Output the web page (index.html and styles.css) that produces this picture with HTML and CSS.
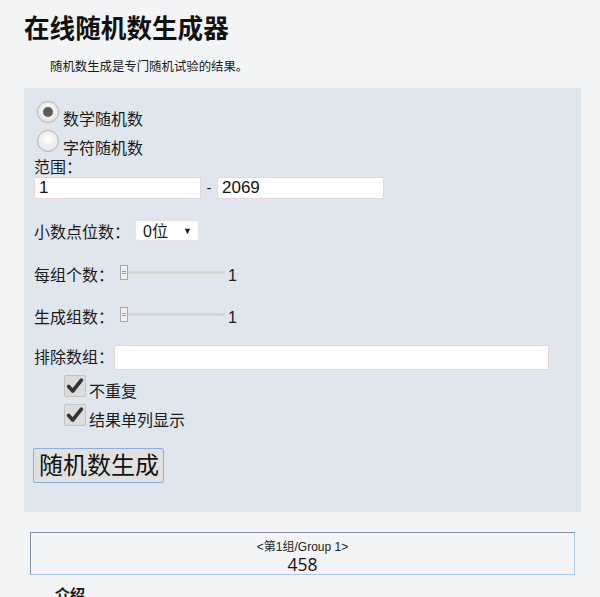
FILE: index.html
```html
<!DOCTYPE html>
<html lang="zh-CN">
<head>
<meta charset="utf-8">
<title>在线随机数生成器</title>
<link rel="stylesheet" href="styles.css">
</head>
<body>
<div class="page">
  <h1 class="title">在线随机数生成器</h1>
  <p class="subtitle">随机数生成是专门随机试验的结果。</p>

  <div class="panel">
    <div class="radio-row">
      <span class="radio checked"></span><span class="lbl">数学随机数</span>
    </div>
    <div class="radio-row second">
      <span class="radio"></span><span class="lbl">字符随机数</span>
    </div>
    <div class="text-row">范围：</div>
    <div class="range-row">
      <span class="field range-field">1</span>
      <span class="dash">-</span>
      <span class="field range-field">2069</span>
    </div>

    <div class="select-row">
      <span class="lbl">小数点位数：</span>
      <span class="select"><span>0位</span><span class="arrow">▼</span></span>
    </div>

    <div class="slider-row">
      <span class="lbl">每组个数：</span>
      <span class="slider"><span class="track"></span><span class="thumb"></span></span>
      <span class="val">1</span>
    </div>
    <div class="slider-row">
      <span class="lbl">生成组数：</span>
      <span class="slider"><span class="track"></span><span class="thumb"></span></span>
      <span class="val">1</span>
    </div>

    <div class="exclude-row">
      <span class="lbl">排除数组：</span>
      <span class="field exclude-field"></span>
    </div>

    <div class="check-row">
      <span class="check"><svg viewBox="0 0 22 22" width="22" height="22"><path d="M4 11.5 L8.5 16.5 L18 4.5" fill="none" stroke="#333" stroke-width="4" stroke-linecap="round" stroke-linejoin="round"/></svg></span><span class="lbl">不重复</span>
    </div>
    <div class="check-row second">
      <span class="check"><svg viewBox="0 0 22 22" width="22" height="22"><path d="M4 11.5 L8.5 16.5 L18 4.5" fill="none" stroke="#333" stroke-width="4" stroke-linecap="round" stroke-linejoin="round"/></svg></span><span class="lbl">结果单列显示</span>
    </div>

    <div class="btn-row">
      <span class="btn">随机数生成</span>
    </div>
  </div>

  <div class="result">
    <div class="group">&lt;第1组/Group 1&gt;</div>
    <div class="num">458</div>
  </div>

  <h3 class="intro">介绍</h3>
</div>
</body>
</html>
```

FILE: styles.css
```css
html, body {
  margin: 0;
  padding: 0;
  background: #f3f4f6;
  color: #1a1a1a;
  font-family: "Liberation Sans", "Noto Sans CJK SC", sans-serif;
  overflow: hidden;
}

.page {
  padding: 0 19px 0 24px;
}

.title {
  margin: 14px 0 0;
  font-size: 25.6px;
  line-height: 30px;
  font-weight: bold;
  color: #111;
}

.subtitle {
  margin: 15px 0 0;
  padding-left: 26px;
  font-size: 12.4px;
  line-height: 16px;
  color: #1a1a1a;
}

.panel {
  margin-top: 13px;
  width: 537px;
  background: #e0e6ee;
  padding: 11px 10px 29px 10px;
}

.lbl {
  font-size: 16px;
  line-height: 18px;
  white-space: nowrap;
}

.radio-row {
  display: flex;
  align-items: flex-end;
  height: 28px;
}
.radio-row.second {
  height: 29px;
}
.radio-row .lbl {
  margin-bottom: -2px;
}

.radio {
  width: 20px;
  height: 20px;
  margin: 0 4px 4px 3px;
  border: 1px solid #b4b4b4;
  border-radius: 50%;
  background: radial-gradient(circle at 50% 40%, #fdfdfd 0%, #ececec 60%, #d6d6d6 100%);
  position: relative;
  flex: none;
}
.radio.checked::after {
  content: "";
  position: absolute;
  left: 5px;
  top: 5px;
  width: 10px;
  height: 10px;
  border-radius: 50%;
  background: #5c5c5c;
}

.text-row {
  font-size: 16px;
  line-height: 20px;
  padding-top: 2px;
  height: 18px;
}

.field {
  display: block;
  background: #fff;
  border: 1px solid #ead5dc;
  border-radius: 2px;
  box-sizing: border-box;
  font-family: "Liberation Sans", sans-serif;
  font-size: 17px;
  line-height: 20px;
  padding-left: 4px;
  color: #111;
}

.range-row {
  display: flex;
  align-items: center;
  margin-top: 1px;
  height: 22px;
}
.range-field {
  width: 167px;
  height: 22px;
}
.dash {
  width: 16px;
  text-align: center;
  font-size: 15px;
  line-height: 20px;
}

.select-row {
  display: flex;
  align-items: center;
  margin-top: 21px;
  height: 21px;
}
.select-row .lbl {
  padding-top: 4px;
}
.select {
  display: flex;
  align-items: center;
  justify-content: space-between;
  margin-left: 5px;
  width: 64px;
  height: 21px;
  box-sizing: border-box;
  background: #fff;
  border: 1px solid #ecdde2;
  border-radius: 2px;
  padding: 1px 6px 0 7px;
  font-size: 16px;
  line-height: 19px;
}
.arrow {
  font-size: 9px;
  line-height: 10px;
}

.slider-row {
  display: flex;
  align-items: center;
  margin-top: 24px;
  height: 20px;
}
.slider-row + .slider-row {
  margin-top: 22px;
}
.slider-row .lbl,
.slider-row .val {
  padding-top: 2px;
}
.slider {
  position: relative;
  width: 105px;
  height: 20px;
  margin-left: 6px;
  flex: none;
}
.track {
  position: absolute;
  left: 0;
  right: 0;
  top: 6px;
  height: 3px;
  background: #d6d6d6;
  border-radius: 2px;
}
.thumb {
  position: absolute;
  left: 0;
  top: 0;
  width: 8px;
  height: 15px;
  box-sizing: border-box;
  background: #f0f0f0 linear-gradient(#999, #999) center 5px / 4px 1px no-repeat;
  border: 1px solid #a8a8a8;
}
.thumb::after {
  content: "";
  position: absolute;
  left: 1px;
  top: 7px;
  width: 4px;
  height: 1px;
  background: #999;
}
.val {
  margin-left: 3px;
  font-size: 16px;
  line-height: 18px;
}

.exclude-row {
  display: flex;
  align-items: center;
  margin-top: 18px;
  height: 25px;
}
.exclude-field {
  width: 435px;
  height: 25px;
}

.check-row {
  display: flex;
  align-items: flex-end;
  margin-top: 4px;
  height: 25px;
  padding-left: 30px;
}
.check-row.second {
  margin-top: 0;
  height: 29px;
}
.check-row .lbl {
  margin-bottom: -2px;
}
.check {
  width: 22px;
  height: 22px;
  box-sizing: border-box;
  margin: 0 3px 2px 0;
  background: #dcdcdc;
  border: 1px solid #c4c4c4;
  border-radius: 2px;
  display: flex;
  align-items: center;
  justify-content: center;
  flex: none;
}
.check svg {
  display: block;
}

.btn-row {
  margin-top: 20px;
  display: flex;
}
.btn {
  display: block;
  margin-left: -1px;
  height: 35px;
  box-sizing: border-box;
  padding: 0 4px 0 5px;
  background: #e1e1e1;
  border: 1px solid #8aaee6;
  border-radius: 2px;
  font-size: 24px;
  line-height: 33px;
  color: #111;
}

.result {
  margin: 20px 0 0 6px;
  width: 545px;
  height: 43px;
  box-sizing: border-box;
  border: 1px solid #a9c8ea;
  border-top-color: #8293a8;
  border-left-color: #8293a8;
  text-align: center;
  padding-top: 7px;
}
.group {
  font-size: 12px;
  line-height: 14px;
  color: #222;
}
.num {
  font-family: "Open Sans", "Liberation Sans", sans-serif;
  font-size: 17.5px;
  line-height: 20px;
  color: #111;
}

.intro {
  margin: 10px 0 0 31px;
  font-size: 15px;
  line-height: 20px;
  font-weight: bold;
}
```
